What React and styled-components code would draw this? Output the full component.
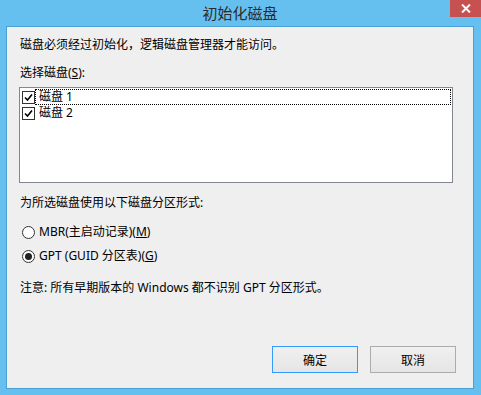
import React from 'react';
import styled, { createGlobalStyle } from 'styled-components';

const GlobalStyle = createGlobalStyle`
  html, body {
    margin: 0;
    padding: 0;
    background: #65c0ef;
  }
  body {
    font-family: "Segoe UI", "Noto Sans", "Noto Sans CJK SC", sans-serif;
    font-size: 12px;
    color: #000;
  }
`;

const Frame = styled.div`
  width: 481px;
  height: 395px;
  box-sizing: border-box;
  background: #65c0ef;
  padding: 0 7px 6px 6px;
  display: flex;
  flex-direction: column;
`;

const TitleBar = styled.div`
  height: 26px;
  position: relative;
  display: flex;
  justify-content: center;
  align-items: center;
  color: #2b2b2b;
  font-size: 15px;
  font-family: "Noto Sans CJK SC", sans-serif;
  padding-bottom: 2px;
  box-sizing: border-box;
`;

const CloseButton = styled.div`
  position: absolute;
  top: 0;
  right: -7px;
  width: 31px;
  height: 17px;
  background: #c75050;
  display: flex;
  align-items: center;
  justify-content: center;
`;

const Client = styled.div`
  flex: 1;
  border: 1px solid #4a9fd3;
  background: #efefef;
  display: flex;
  flex-direction: column;
  padding: 10px 17px 15px 12px;
  box-sizing: border-box;
`;

const Line = styled.div`
  height: 16px;
  line-height: 16px;
  white-space: nowrap;
  margin-top: ${(p) => p.$gap || 0}px;
  padding-left: 1px;
`;

const ListBox = styled.div`
  margin-top: 6px;
  width: 434px;
  height: 96px;
  box-sizing: border-box;
  border: 1px solid #828790;
  background: #fff;
  padding: 1px 1px 0 2px;
`;

const Item = styled.div`
  height: 16px;
  display: flex;
  align-items: center;
  position: relative;
`;

const Focus = styled.div`
  position: absolute;
  left: 13px;
  right: 0;
  top: 0;
  bottom: 0;
  border: 1px dotted #000;
`;

const CheckBox = styled.div`
  width: 13px;
  height: 13px;
  box-sizing: border-box;
  border: 1px solid #333;
  background: #fff;
  display: flex;
  align-items: center;
  justify-content: center;
`;

const ItemText = styled.span`
  margin-left: 4px;
  line-height: 16px;
`;

const Radio = styled.div`
  width: 13px;
  height: 13px;
  box-sizing: border-box;
  border: 1px solid #333;
  border-radius: 50%;
  background: #fff;
  display: flex;
  align-items: center;
  justify-content: center;
  &::after {
    content: '';
    width: 7px;
    height: 7px;
    border-radius: 50%;
    background: ${(p) => (p.$checked ? '#222' : 'transparent')};
  }
`;

const RadioRow = styled.div`
  display: flex;
  align-items: center;
  height: 16px;
  margin-top: ${(p) => p.$gap}px;
  padding-left: 3px;
`;

const RadioText = styled.span`
  margin-left: 4px;
  line-height: 16px;
`;

const Buttons = styled.div`
  margin-top: auto;
  display: flex;
  justify-content: flex-end;
  gap: 12px;
`;

const Button = styled.div`
  width: 86px;
  height: 27px;
  box-sizing: border-box;
  border: 1px solid ${(p) => (p.$default ? '#3399ff' : '#acacac')};
  background: linear-gradient(#f0f0f0, #e5e5e5);
  display: flex;
  align-items: center;
  justify-content: center;
  font-family: "Noto Sans CJK SC", sans-serif;
`;

const U = styled.span`
  text-decoration: underline;
`;

const Check = () => (
  <svg width="9" height="9" viewBox="0 0 9 9">
    <path d="M1 4.5 L3.5 7 L8 1.5" fill="none" stroke="#000" strokeWidth="1.6" />
  </svg>
);

export default function App() {
  return (
    <>
      <GlobalStyle />
      <Frame>
        <TitleBar>
          初始化磁盘
          <CloseButton>
            <svg width="10" height="9" viewBox="0 0 10 9">
              <path d="M1 0.5 L9 8.5 M9 0.5 L1 8.5" stroke="#fff" strokeWidth="2" />
            </svg>
          </CloseButton>
        </TitleBar>
        <Client>
          <Line>磁盘必须经过初始化，逻辑磁盘管理器才能访问。</Line>
          <Line $gap={12}>
            选择磁盘(<U>S</U>):
          </Line>
          <ListBox>
            <Item>
              <CheckBox>
                <Check />
              </CheckBox>
              <ItemText>磁盘 1</ItemText>
              <Focus />
            </Item>
            <Item>
              <CheckBox>
                <Check />
              </CheckBox>
              <ItemText>磁盘 2</ItemText>
            </Item>
          </ListBox>
          <Line $gap={12}>为所选磁盘使用以下磁盘分区形式:</Line>
          <RadioRow $gap={13}>
            <Radio />
            <RadioText>
              MBR(主启动记录)(<U>M</U>)
            </RadioText>
          </RadioRow>
          <RadioRow $gap={8}>
            <Radio $checked />
            <RadioText>
              GPT (GUID 分区表)(<U>G</U>)
            </RadioText>
          </RadioRow>
          <Line $gap={16}>注意: 所有早期版本的 Windows 都不识别 GPT 分区形式。</Line>
          <Buttons>
            <Button $default>确定</Button>
            <Button>取消</Button>
          </Buttons>
        </Client>
      </Frame>
    </>
  );
}
